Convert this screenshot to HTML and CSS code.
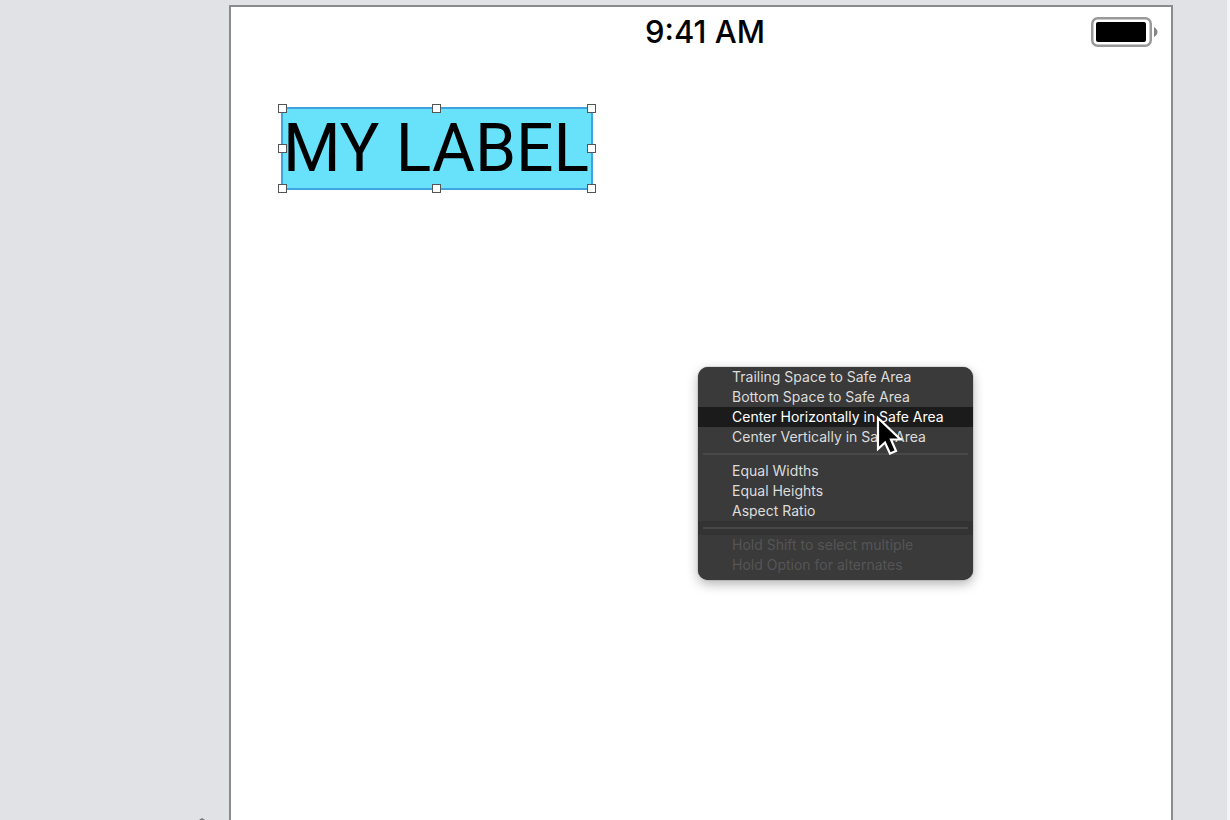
FILE: index.html
```html
<!DOCTYPE html>
<html lang="en">
<head>
<meta charset="utf-8">
<title>Interface Builder</title>
<meta name="viewport" content="width=device-width, initial-scale=1">
<link rel="stylesheet" href="styles.css">
</head>
<body>
<main class="canvas">
  <section class="device" aria-label="View controller">
    <header class="status-bar">
      <time class="clock">9:41 AM</time>
      <svg class="battery" width="68" height="30" viewBox="0 0 68 30" role="img" aria-label="Battery full">
        <rect x="1.250" y="1.250" width="58.500" height="27.500" rx="5.500" fill="#fff" stroke="#999" stroke-width="2.500"/>
        <rect x="5" y="5" width="50" height="20" rx="2" fill="#000"/>
        <path d="M63 10c2 1 3.500 3 3.500 5s-1.500 4-3.500 5z" fill="#858585"/>
      </svg>
    </header>

    <div class="ui-label">
      MY LABEL
      <span class="handle top left"></span>
      <span class="handle top center"></span>
      <span class="handle top right"></span>
      <span class="handle middle left"></span>
      <span class="handle middle right"></span>
      <span class="handle bottom left"></span>
      <span class="handle bottom center"></span>
      <span class="handle bottom right"></span>
    </div>

    <div class="menu" role="menu" aria-label="Constraints">
      <button class="item" type="button" role="menuitem">Trailing Space to Safe Area</button>
      <button class="item" type="button" role="menuitem">Bottom Space to Safe Area</button>
      <button class="item active" type="button" role="menuitem">Center Horizontally in Safe Area</button>
      <button class="item" type="button" role="menuitem">Center Vertically in Safe Area</button>
      <div class="separator" role="separator"></div>
      <button class="item" type="button" role="menuitem">Equal Widths</button>
      <button class="item" type="button" role="menuitem">Equal Heights</button>
      <button class="item" type="button" role="menuitem">Aspect Ratio</button>
      <div class="separator dark" role="separator"></div>
      <button class="item" type="button" role="menuitem" disabled>Hold Shift to select multiple</button>
      <button class="item" type="button" role="menuitem" disabled>Hold Option for alternates</button>
      <svg class="cursor" width="28" height="42" viewBox="0 0 28 42" aria-hidden="true">
        <path d="M2 4v31l7-6.500 5 11 6-2.500-5-11.500H24.500z" fill="#000" stroke="#fff" stroke-width="2.200"/>
      </svg>
    </div>
  </section>
  <svg class="segue" width="8" height="3" viewBox="0 0 8 3" aria-hidden="true">
    <path d="M1 3l3-2 3 2z" fill="#777"/>
  </svg>
</main>
</body>
</html>
```
FILE: styles.css
```css
* {
  box-sizing: border-box;
}

body {
  margin: 0;
  font-family: Inter, "Liberation Sans", sans-serif;
}

.canvas {
  position: relative;
  display: flex;
  min-height: 100vh;
  padding: 5px 54px 0 229px;
  background: #e0e2e6;
  border-right: 3px solid #f4f5f6;
}

.device {
  position: relative;
  flex: 1;
  background: #fff;
  border: 2px solid #8a8b8d;
  border-bottom: 0;
}

.status-bar {
  display: grid;
  grid-template-columns: 1fr auto 1fr;
  align-items: center;
  padding: 10px 12px 0 20px;
}

.clock {
  grid-column: 2;
  font-size: 31px;
  line-height: 30px;
  font-weight: 500;
}

.battery {
  justify-self: end;
}

.ui-label {
  position: absolute;
  top: 100px;
  left: 50px;
  width: 312px;
  height: 83px;
  border: 2px solid #3fa3e2;
  background: #68e1fa;
  font-family: Roboto, "Liberation Sans", sans-serif;
  font-size: 66px;
  line-height: 80px;
  white-space: nowrap;
}

.handle {
  position: absolute;
  width: 9px;
  height: 9px;
  margin: -5px;
  background: #fff;
  border: 1px solid #555;
}

.top { top: 0; }
.middle { top: 50%; }
.bottom { bottom: 0; }
.left { left: 0; }
.center { left: 50%; }
.right { right: 0; }

.menu {
  position: absolute;
  top: 360px;
  left: 467px;
  width: 275px;
  padding-bottom: 5px;
  border-radius: 10px;
  background: #3a3a3a;
  box-shadow: 0 4px 12px rgba(0, 0, 0, 0.3), 0 0 1px #222;
}

.item {
  display: block;
  width: 100%;
  height: 20px;
  padding: 0 0 0 34px;
  border: 0;
  background: none;
  color: #dcdcdc;
  font: inherit;
  font-size: 14px;
  line-height: 20px;
  text-align: left;
}

.item.active {
  background: #1b1b1b;
  color: #fff;
}

.item:disabled {
  color: #555;
}

.separator {
  padding: 6px 5px;
}

.separator::before {
  content: "";
  display: block;
  height: 2px;
  background: #484848;
}

.separator.dark {
  background: #333;
}

.cursor {
  position: absolute;
  top: 47px;
  left: 178px;
}

.segue {
  position: absolute;
  left: 198px;
  bottom: 0;
}
```
